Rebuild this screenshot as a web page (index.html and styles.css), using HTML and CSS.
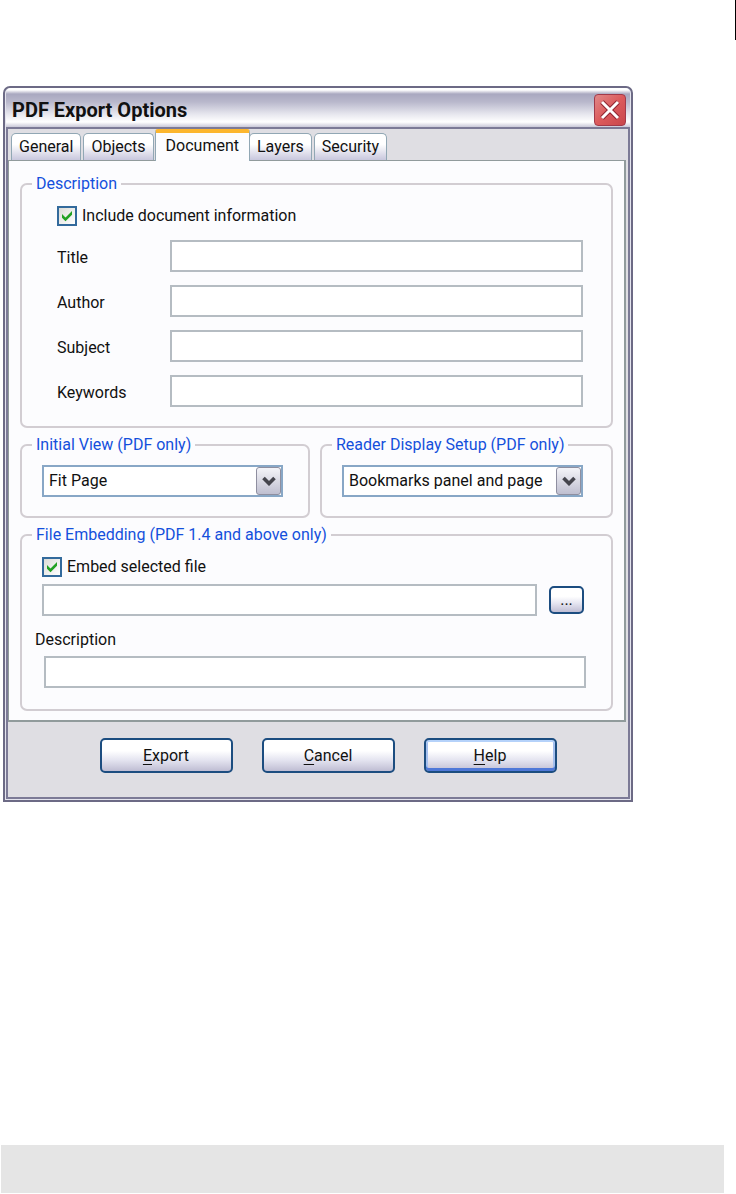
FILE: index.html
```html
<!DOCTYPE html>
<html lang="en">
<head>
    <meta charset="UTF-8">
    <title>PDF Export Options</title>
    <link rel="stylesheet" href="styles.css">
</head>
<body>

    <header class="page-header"></header>

    <main class="window">
        <div class="titlebar">
            <h1>PDF Export Options</h1>
            <button type="button" class="btn-close" aria-label="Close">
                <svg width="20" height="20" viewBox="0 0 20 20">
                    <path d="M2 2L18 18M18 2L2 18" stroke="#8f2430" stroke-width="5" fill="none"/>
                    <path d="M2 2L18 18M18 2L2 18" stroke="#fff" stroke-width="3" fill="none"/>
                </svg>
            </button>
        </div>

        <form class="content">
            <!-- Tabs -->
            <div class="tabs" role="tablist">
                <button type="button" class="tab" role="tab">General</button>
                <button type="button" class="tab" role="tab">Objects</button>
                <button type="button" class="tab active" role="tab" aria-selected="true">Document</button>
                <button type="button" class="tab" role="tab">Layers</button>
                <button type="button" class="tab" role="tab">Security</button>
            </div>

            <div class="panel" role="tabpanel">
                <!-- Document information -->
                <fieldset>
                    <legend>Description</legend>
                    <div class="info">
                        <label class="check">
                            <span class="box">
                                <input type="checkbox" checked>
                                <svg viewBox="0 0 12 12"><path d="M1 4L4.500 7.500L11 1V4.800L4.500 11.200L1 7.800Z" fill="#21a121"/></svg>
                            </span>
                            Include document information
                        </label>
                        <div class="fields">
                            <label for="title">Title</label>
                            <input type="text" id="title">
                            <label for="author">Author</label>
                            <input type="text" id="author">
                            <label for="subject">Subject</label>
                            <input type="text" id="subject">
                            <label for="keywords">Keywords</label>
                            <input type="text" id="keywords">
                        </div>
                    </div>
                </fieldset>

                <!-- View options -->
                <div class="columns">
                    <fieldset>
                        <legend>Initial View (PDF only)</legend>
                        <div class="select">
                            <select aria-label="Initial View">
                                <option>Fit Page</option>
                            </select>
                            <span class="arrow"><svg width="14" height="10" viewBox="0 0 14 10"><path d="M1.500 2L7 7.500L12.500 2" stroke="#45454d" stroke-width="3.600" fill="none"/></svg></span>
                        </div>
                    </fieldset>
                    <fieldset>
                        <legend>Reader Display Setup (PDF only)</legend>
                        <div class="select">
                            <select aria-label="Reader Display Setup">
                                <option>Bookmarks panel and page</option>
                            </select>
                            <span class="arrow"><svg width="14" height="10" viewBox="0 0 14 10"><path d="M1.500 2L7 7.500L12.500 2" stroke="#45454d" stroke-width="3.600" fill="none"/></svg></span>
                        </div>
                    </fieldset>
                </div>

                <!-- Embedded file -->
                <fieldset>
                    <legend>File Embedding (PDF 1.4 and above only)</legend>
                    <div class="embed">
                        <label class="check">
                            <span class="box">
                                <input type="checkbox" checked>
                                <svg viewBox="0 0 12 12"><path d="M1 4L4.500 7.500L11 1V4.800L4.500 11.200L1 7.800Z" fill="#21a121"/></svg>
                            </span>
                            Embed selected file
                        </label>
                        <div class="file">
                            <input type="text" aria-label="File to embed">
                            <button type="button" class="btn btn-browse">...</button>
                        </div>
                    </div>
                    <label class="file-label" for="description">Description</label>
                    <div class="file-description">
                        <input type="text" id="description">
                    </div>
                </fieldset>
            </div>

            <div class="buttons">
                <button type="button" class="btn"><u>E</u>xport</button>
                <button type="button" class="btn"><u>C</u>ancel</button>
                <button type="button" class="btn btn-default"><u>H</u>elp</button>
            </div>
        </form>
    </main>

    <footer class="page-footer"></footer>

</body>
</html>
```

FILE: styles.css
```css
* {
    box-sizing: border-box;
}

body {
    margin: 0;
    min-height: 100vh;
    display: flex;
    flex-direction: column;
    background-color: #fff;
    color: #111;
    font-family: Roboto, sans-serif;
    font-size: 16px;
    line-height: 20px;
}

input, button, select {
    margin: 0;
    font: inherit;
    color: inherit;
}

.page-header {
    height: 40px;
    margin-bottom: 46px;
    border-right: 1px solid #000;
}

.page-footer {
    height: 48px;
    margin: auto 12px 1px 1px;
    background-color: #e5e5e5;
}

/* Dialog window */
.window {
    margin: 0 103px 0 3px;
    padding: 0 1px 1px;
    border: 2px solid #6c6a85;
    border-radius: 7px 7px 0 0;
    background-color: #e4e4ee;
}

.titlebar {
    display: flex;
    align-items: center;
    justify-content: space-between;
    height: 39px;
    padding: 4px 4px 0 6px;
    border-radius: 5px 5px 0 0;
    background: linear-gradient(#fff 0, #fff 2px, #a9a8c0 6px, #b9b8cc 14px, #e6e6ee 26px, #fff 34px, #c9c8d8 39px);
}

.titlebar h1 {
    margin: 0;
    font-size: 20px;
    font-weight: bold;
    line-height: 24px;
}

.btn-close {
    display: flex;
    align-items: center;
    justify-content: center;
    width: 32px;
    height: 32px;
    padding: 0;
    border: 1px solid #a23a4a;
    border-radius: 4px;
    background: linear-gradient(135deg, #e08888, #dc5a5c 50%, #c9474c);
}

.content {
    padding: 0 2px 0 0;
    border: 2px solid #7c7a96;
    background-color: #dfdee3;
}

/* Tabs */
.tabs {
    display: flex;
    align-items: flex-end;
    gap: 2px;
    height: 31px;
    padding-left: 3px;
}

.tab {
    height: 27px;
    padding: 0 7px;
    border: 1px solid #91a7b4;
    border-bottom: 0;
    border-radius: 5px 5px 0 0;
    background: linear-gradient(#fff 40%, #c8c7dd);
}

.tab.active {
    height: 32px;
    margin: 0 -3px -1px -1px;
    padding: 0 10px 3px;
    border-top: 4px solid #fcb62e;
    border-radius: 3px 3px 0 0;
    background: #fcfcfe;
    z-index: 1;
}

.panel {
    display: flex;
    flex-direction: column;
    gap: 7px;
    padding: 13px 11px 9px 11px;
    border: solid #919b9c;
    border-width: 1px 2px 2px 1px;
    background-color: #fcfcfe;
}

/* Group boxes */
fieldset {
    min-width: 0;
    margin: 0;
    padding: 12px 10px 19px;
    border: 2px solid #d2cdd2;
    border-radius: 7px;
}

legend {
    padding: 0 4px;
    color: #1450dc;
}

.columns {
    display: grid;
    grid-template-columns: 290fr 293fr;
    gap: 10px;
}

.columns fieldset {
    padding: 10px 20px 19px;
}

.columns legend {
    margin-left: -10px;
}

/* Text boxes */
input[type="text"] {
    width: 100%;
    min-width: 0;
    height: 32px;
    padding: 0 6px;
    border: 2px solid #b5bcc2;
    background-color: #fff;
}

.info {
    padding: 0 18px 0 25px;
}

.fields {
    display: grid;
    grid-template-columns: 100px 1fr;
    gap: 13px;
    align-items: center;
    margin-top: 14px;
}

.fields label {
    padding-top: 4px;
}

/* Check boxes */
.check {
    display: flex;
    align-items: center;
    gap: 5px;
}

.box {
    position: relative;
    width: 20px;
    height: 20px;
}

.box input {
    display: block;
    appearance: none;
    width: 20px;
    height: 20px;
    border: 2px solid #336a9c;
    background: linear-gradient(135deg, #dcdcd7, #fff);
}

.box svg {
    position: absolute;
    top: 4px;
    left: 4px;
    width: 12px;
    height: 12px;
    pointer-events: none;
}

.box input:not(:checked) + svg {
    display: none;
}

/* Drop-downs */
.select {
    position: relative;
    max-width: 241px;
}

select {
    display: block;
    appearance: none;
    width: 100%;
    height: 32px;
    padding: 0 30px 0 5px;
    border: 2px solid #88a7c6;
    border-radius: 0;
    background-color: #fff;
}

.arrow {
    position: absolute;
    top: 2px;
    right: 2px;
    bottom: 2px;
    display: flex;
    align-items: center;
    justify-content: center;
    width: 25px;
    border: 1px solid #8f8fa0;
    border-radius: 3px;
    background: linear-gradient(#f4f4f8, #bfbfd0);
    pointer-events: none;
}

/* Embedded file */
.embed {
    padding: 0 17px 0 10px;
}

.file {
    display: flex;
    align-items: center;
    gap: 12px;
    margin-top: 7px;
}

.file-label {
    display: block;
    margin: 14px 0 6px 3px;
}

.file-description {
    padding: 0 15px 2px 12px;
}

/* Push buttons */
.btn {
    width: 133px;
    height: 35px;
    padding: 0;
    border: 2px solid #1c4d80;
    border-radius: 5px;
    background: linear-gradient(#fff 35%, #e4e4f0 65%, #bfbdd3);
}

.btn u {
    text-underline-offset: 3px;
}

.btn-browse {
    flex: none;
    width: 35px;
    height: 28px;
    line-height: 16px;
}

.btn-default {
    box-shadow: inset 0 2px #b5d2fa, inset 0 -3px #4f78d8, inset 2px 0 #a5c0ee, inset -2px 0 #a5c0ee;
}

.buttons {
    display: flex;
    justify-content: center;
    gap: 29px;
    padding: 16px 0 24px 22px;
}
```
